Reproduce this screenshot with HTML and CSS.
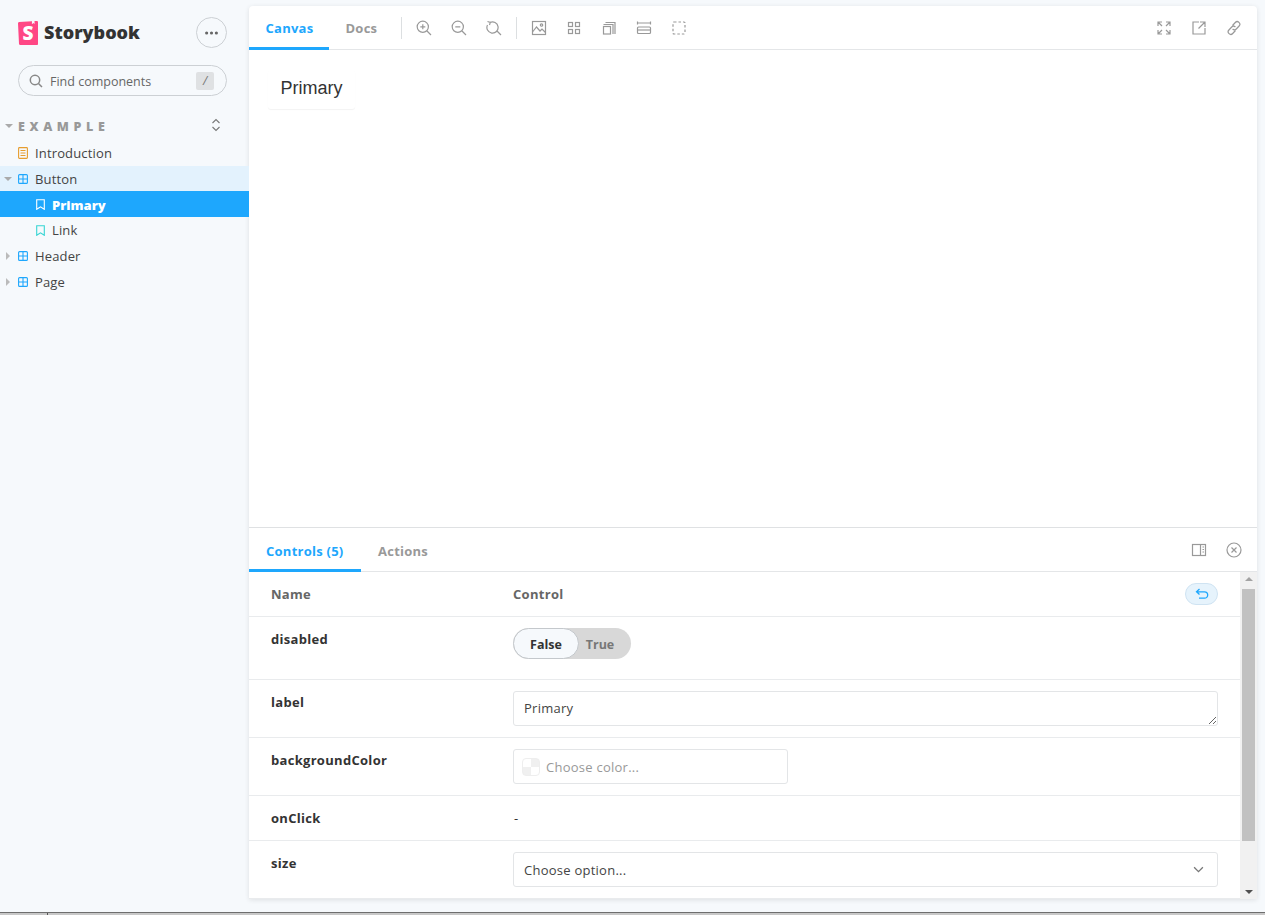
FILE: index.html
```html
<!DOCTYPE html>
<html lang="en">
<head>
    <meta charset="UTF-8">
    <title>Storybook</title>
    <link rel="stylesheet" href="styles.css">
</head>
<body>
    <div class="app">
        <aside class="sidebar">
            <div class="brand-row">
                <div class="brand">
                    <svg class="brand-logo" viewBox="0 0 20 24" width="20" height="24">
                        <path fill="#ff4785" d="M1 23 0 2.2C0 1.6.4 1.1 1 1L14 .2l-.1 2.7c0 .2.3.3.4.1l1-.9.9.7c.1.1.4 0 .4-.2L16.500 0l2.400-.1c.6 0 1.100.5 1.100 1.100v22c0 .6-.5 1.100-1.100 1L2 23.900c-.5 0-1-.4-1-.9z"/>
                        <text x="10" y="18.500" class="brand-s">S</text>
                    </svg>
                    <span class="brand-name">Storybook</span>
                </div>
                <button class="menu-btn" aria-label="Menu">
                    <svg viewBox="0 0 16 4" width="13" height="4"><circle cx="2" cy="2" r="1.900"/><circle cx="8" cy="2" r="1.900"/><circle cx="14" cy="2" r="1.900"/></svg>
                </button>
            </div>

            <div class="search">
                <svg viewBox="0 0 14 14" width="14" height="14" class="search-icon"><circle cx="6" cy="6" r="4.700"/><path d="M9.500 9.500 13 13"/></svg>
                <span class="search-text">Find components</span>
                <span class="search-key">/</span>
            </div>

            <div class="group-head">
                <span class="caret caret-down"></span>
                <span class="group-title">Example</span>
                <svg viewBox="0 0 10 14" width="10" height="14" class="expand-icon"><path d="M1.500 5 5 1.500 8.500 5M1.500 9 5 12.500 8.500 9"/></svg>
            </div>

            <ul class="tree">
                <li class="tree-row">
                    <svg viewBox="0 0 10 12" width="10" height="12" class="tree-icon doc"><rect x=".6" y=".6" width="8.800" height="10.800" rx=".8"/><path d="M2.500 3.500h5M2.500 6h5M2.500 8.500h5"/></svg>
                    Introduction
                </li>
                <li class="tree-row tree-open">
                    <span class="caret caret-down"></span>
                    <svg viewBox="0 0 10 10" width="10" height="10" class="tree-icon comp"><rect x=".6" y=".6" width="8.800" height="8.800" rx="1"/><path d="M5 .6v8.800M.6 5h8.800"/></svg>
                    Button
                </li>
                <li class="tree-row tree-story tree-selected">
                    <svg viewBox="0 0 9 11" width="9" height="11" class="tree-icon mark"><path d="M.7.7h7.600v9.600L4.500 7.800.7 10.300z"/></svg>
                    Primary
                </li>
                <li class="tree-row tree-story">
                    <svg viewBox="0 0 9 11" width="9" height="11" class="tree-icon mark"><path d="M.7.7h7.600v9.600L4.500 7.800.7 10.300z"/></svg>
                    Link
                </li>
                <li class="tree-row">
                    <span class="caret caret-right"></span>
                    <svg viewBox="0 0 10 10" width="10" height="10" class="tree-icon comp"><rect x=".6" y=".6" width="8.800" height="8.800" rx="1"/><path d="M5 .6v8.800M.6 5h8.800"/></svg>
                    Header
                </li>
                <li class="tree-row">
                    <span class="caret caret-right"></span>
                    <svg viewBox="0 0 10 10" width="10" height="10" class="tree-icon comp"><rect x=".6" y=".6" width="8.800" height="8.800" rx="1"/><path d="M5 .6v8.800M.6 5h8.800"/></svg>
                    Page
                </li>
            </ul>
        </aside>

        <main class="main">
            <div class="toolbar">
                <a class="tab tab-canvas tab-active">Canvas</a>
                <a class="tab tab-docs">Docs</a>
                <span class="sep sep-first"></span>
                <span class="tool"><svg viewBox="0 0 16 16"><circle cx="6.800" cy="6.800" r="5.600"/><path d="m11 11 4 4M4.300 6.800h5M6.800 4.300v5"/></svg></span>
                <span class="tool"><svg viewBox="0 0 16 16"><circle cx="6.800" cy="6.800" r="5.600"/><path d="m11 11 4 4M4.300 6.800h5"/></svg></span>
                <span class="tool"><svg viewBox="0 0 16 16"><path d="M4 2.500A5.600 5.600 0 1 1 1.500 5M11 11l4 4M1.500 1.500 4.300 2.300 3.500 5"/></svg></span>
                <span class="sep"></span>
                <span class="tool"><svg viewBox="0 0 16 16"><rect x="1.500" y="1.500" width="13" height="13"/><path d="m1.500 12 4-5 3.500 4 2-2 3.500 3.500"/><circle cx="10.500" cy="5" r="1.200"/></svg></span>
                <span class="tool"><svg viewBox="0 0 16 16"><rect x="2.500" y="2.500" width="4" height="4"/><rect x="9.500" y="2.500" width="4" height="4"/><rect x="2.500" y="9.500" width="4" height="4"/><rect x="9.500" y="9.500" width="4" height="4"/></svg></span>
                <span class="tool"><svg viewBox="0 0 16 16"><rect x="2.500" y="6.500" width="7" height="7.500"/><path d="M2.500 4.500h9.500v9.500M4.500 2.500h9.500v11.500"/></svg></span>
                <span class="tool"><svg viewBox="0 0 16 16"><path d="M1.500 3h13M1.500 1.500v3M14.500 1.500v3"/><rect x="1.500" y="7" width="13" height="6.500" rx="1"/><path d="M1.500 10h13"/></svg></span>
                <span class="tool"><svg viewBox="0 0 16 16"><rect x="2" y="2" width="12" height="12" rx="1" stroke-dasharray="2.500 2"/></svg></span>
                <span class="toolbar-end">
                    <span class="tool"><svg viewBox="0 0 16 16"><path d="M2 6V2h4M2 2l4 4M10 2h4v4M14 2l-4 4M2 10v4h4M2 14l4-4M14 10v4h-4M14 14l-4-4"/></svg></span>
                    <span class="tool"><svg viewBox="0 0 16 16"><path d="M8 2H2v12h12V8M9 2h5v5M14 2 7.500 8.500"/></svg></span>
                    <span class="tool"><svg viewBox="0 0 16 16"><path d="m6.500 5.500 2.800-3a2.500 2.500 0 0 1 3.800 3.500l-2.800 3a2.500 2.500 0 0 1-3.700 0M9.500 10.500l-2.800 3a2.500 2.500 0 0 1-3.800-3.500l2.800-3a2.500 2.500 0 0 1 3.700 0"/></svg></span>
                </span>
            </div>

            <div class="preview">
                <button class="demo-btn">Primary</button>
            </div>

            <section class="addons">
                <div class="addon-tabs">
                    <a class="tab tab-controls tab-active">Controls (5)</a>
                    <a class="tab">Actions</a>
                    <span class="toolbar-end">
                        <span class="tool"><svg viewBox="0 0 16 16"><rect x="1.500" y="2.500" width="13" height="11"/><path d="M9.500 2.500v11M11.500 5h1.500M11.500 7.500h1.500M11.500 10h1.500"/></svg></span>
                        <span class="tool"><svg viewBox="0 0 16 16"><circle cx="8" cy="8" r="7"/><path d="m5.500 5.500 5 5M10.500 5.500l-5 5" class="thick"/></svg></span>
                    </span>
                </div>

                <div class="addon-body">
                    <div class="args">
                        <div class="arg-row arg-head">
                            <span>Name</span>
                            <span>Control</span>
                            <button class="reset-btn" aria-label="Reset">
                                <svg viewBox="0 0 14 12" width="14" height="12"><path d="M4.500 1 1.500 3.800l3 2.800M1.500 3.800h8a3 3 0 0 1 0 6.400H4"/></svg>
                            </button>
                        </div>
                        <div class="arg-row">
                            <span class="arg-name">disabled</span>
                            <div class="toggle">
                                <span class="toggle-on">False</span>
                                <span class="toggle-off">True</span>
                            </div>
                        </div>
                        <div class="arg-row">
                            <span class="arg-name">label</span>
                            <textarea class="field text-field">Primary</textarea>
                        </div>
                        <div class="arg-row">
                            <span class="arg-name">backgroundColor</span>
                            <div class="field color-field">
                                <span class="swatch"></span>
                                <span class="color-hint">Choose color...</span>
                            </div>
                        </div>
                        <div class="arg-row arg-plain">
                            <span class="arg-name">onClick</span>
                            <span class="dash">-</span>
                        </div>
                        <div class="arg-row">
                            <span class="arg-name">size</span>
                            <div class="field select-field">
                                <span>Choose option...</span>
                                <svg viewBox="0 0 12 8" width="11" height="7"><path d="m1 1.500 5 5 5-5"/></svg>
                            </div>
                        </div>
                    </div>
                    <div class="scrollbar">
                        <span class="arrow-up"></span>
                        <span class="thumb"></span>
                        <span class="arrow-down"></span>
                    </div>
                </div>
            </section>
        </main>
    </div>
    <div class="taskbar"><span class="taskbar-cell"></span></div>
</body>
</html>
```

FILE: styles.css
```css
* {
    box-sizing: border-box;
}
html, body {
    height: 100%;
}
body {
    margin: 0;
    overflow: hidden;
    font-family: "Open Sans", "Noto Sans", sans-serif;
    font-size: 13px;
    color: #333;
    background-color: #f6f9fc;
}
.app {
    display: flex;
    height: 912px;
}

/* sidebar */
.sidebar {
    width: 249px;
    flex: none;
    padding-top: 17px;
}
.brand-row {
    display: flex;
    align-items: center;
    justify-content: space-between;
    padding: 0 22px 0 18px;
    height: 31px;
}
.brand {
    display: flex;
    align-items: center;
    gap: 6px;
}
.brand-s {
    font-size: 19px;
    font-weight: 800;
    fill: #fff;
    text-anchor: middle;
}
.brand-name {
    padding-bottom: 2px;
    font-size: 18px;
    font-weight: 800;
    color: #333;
}
.menu-btn {
    width: 31px;
    height: 31px;
    padding: 0;
    border: 1px solid #ccd0d4;
    border-radius: 50%;
    background: none;
    fill: #666;
}
.menu-btn svg {
    display: block;
    margin: 0 auto;
}
.search {
    display: flex;
    align-items: center;
    height: 31px;
    margin: 17px 22px 0 18px;
    padding: 0 12px 0 10px;
    border: 1px solid #ccd0d4;
    border-radius: 16px;
}
.search-icon {
    fill: none;
    stroke: #888;
    stroke-width: 1.5;
}
.search-text {
    flex: 1;
    margin-left: 7px;
    padding-top: 1px;
    font-size: 12.500px;
    color: #666;
}
.search-key {
    width: 18px;
    height: 18px;
    line-height: 18px;
    text-align: center;
    font-size: 12px;
    font-style: italic;
    color: #777;
    background-color: #dfe1e3;
    border-radius: 2px;
}
.group-head {
    position: relative;
    display: flex;
    align-items: center;
    height: 20px;
    margin-top: 20px;
    padding-left: 5px;
}
.group-title {
    margin-left: 5px;
    font-size: 12.500px;
    font-weight: 800;
    letter-spacing: 0.37em;
    text-transform: uppercase;
    color: #999;
}
.expand-icon {
    position: absolute;
    left: 211px;
    top: 2px;
    fill: none;
    stroke: #777;
    stroke-width: 1.1;
}
.caret {
    display: inline-block;
    width: 0;
    height: 0;
    flex: none;
}
.caret-down {
    border-left: 4px solid transparent;
    border-right: 4px solid transparent;
    border-top: 4px solid #aaa;
}
.caret-right {
    border-top: 4px solid transparent;
    border-bottom: 4px solid transparent;
    border-left: 4px solid #bbb;
    margin-left: 2px;
}
.tree {
    list-style: none;
    margin: 4px 0 0;
    padding: 0;
}
.tree-row {
    position: relative;
    display: flex;
    align-items: center;
    height: 26px;
    padding-left: 35px;
    letter-spacing: 0.15px;
    color: #444;
}
.tree-row:last-child {
    height: 25px;
}
.tree-row .caret {
    position: absolute;
    left: 4px;
    top: 11px;
}
.tree-row .caret-right {
    left: 4px;
    top: 9px;
    margin-left: 2px;
}
.tree-icon {
    position: absolute;
    left: 18px;
    fill: none;
    stroke-width: 1.1;
}
.doc {
    stroke: #e69d2f;
}
.comp {
    stroke: #1ea7fd;
}
.mark {
    stroke: #37d5d3;
    left: 36px;
}
.tree-open {
    height: 25px;
    padding-top: 1px;
    background-color: #e3f2fd;
}
.tree-story {
    padding-left: 52px;
}
.tree-selected {
    padding-top: 1px;
    background-color: #1ea7fd;
    color: #fff;
    font-weight: 800;
    letter-spacing: 0;
}
.tree-selected .mark {
    stroke: #fff;
}

/* main panel */
.main {
    display: flex;
    flex-direction: column;
    width: 1008px;
    height: 893px;
    margin-top: 6px;
    background-color: #fff;
    border-radius: 4px 4px 0 0;
    box-shadow: 0 1px 5px rgba(0, 0, 0, 0.1);
}
.toolbar {
    display: flex;
    align-items: stretch;
    flex: none;
    height: 44px;
    border-bottom: 1px solid #e4e6e8;
}
.tab {
    display: flex;
    align-items: center;
    padding: 3px 16px 0 16.500px;
    margin-bottom: -1px;
    font-weight: 700;
    letter-spacing: 0.25px;
    color: #999;
    border-bottom: 3px solid transparent;
}
.tab-active {
    color: #1ea7fd;
    border-bottom-color: #1ea7fd;
}
.tab-canvas {
    width: 80px;
}
.tab-docs {
    width: 66px;
}
.tab-controls {
    width: 112px;
}
.sep {
    width: 1px;
    height: 22px;
    margin: 11px 4.500px 0;
    background-color: #dcdfe1;
}
.sep-first {
    margin-left: 6px;
}
.tool {
    display: flex;
    align-items: center;
    justify-content: center;
    width: 35px;
}
.tool svg {
    width: 16px;
    height: 16px;
    fill: none;
    stroke: #999;
    stroke-width: 1.200;
}
.toolbar-end {
    display: flex;
    margin-left: auto;
    margin-right: 6px;
}

/* story */
.preview {
    flex: 1;
    padding: 20px 19px;
}
.demo-btn {
    display: block;
    width: 87px;
    height: 39px;
    padding: 0 0 2px;
    border: none;
    border-radius: 3px;
    background-color: #fff;
    font-family: "Liberation Sans", Arial, sans-serif;
    font-size: 18px;
    color: #333;
    box-shadow: 0 1px 1px rgba(0, 0, 0, 0.05);
}

/* addon panel */
.addons {
    flex: none;
    height: 372px;
    border-top: 1px solid #dfe1e3;
    display: flex;
    flex-direction: column;
}
.addon-tabs {
    display: flex;
    flex: none;
    height: 44px;
    border-bottom: 1px solid #e4e6e8;
}
.addon-tabs .tab {
    padding-top: 5px;
    padding-left: 17px;
}
.addon-body {
    display: flex;
    flex: 1;
    min-height: 0;
}
.args {
    flex: 1;
}
.arg-row {
    display: grid;
    grid-template-columns: 242px 1fr;
    align-items: start;
    position: relative;
    height: 58px;
    padding: 11px 22px 0;
    border-bottom: 1px solid #e9ebed;
}
.arg-row:nth-child(2) {
    height: 63px;
}
.arg-head {
    height: 45px;
    padding-top: 13px;
    font-weight: 700;
    letter-spacing: 0.3px;
    color: #666;
}
.arg-plain {
    height: 45px;
}
.arg-name {
    padding-top: 2px;
    font-weight: 700;
    letter-spacing: 0.3px;
    color: #333;
}
.reset-btn {
    position: absolute;
    right: 22px;
    top: 11px;
    width: 33px;
    height: 22px;
    padding: 0;
    border: 1px solid #cfe3f2;
    border-radius: 11px;
    background-color: #e6f3fc;
}
.reset-btn svg {
    display: block;
    margin: 0 auto;
    fill: none;
    stroke: #1ea7fd;
    stroke-width: 1.300;
}
.toggle {
    display: flex;
    align-items: center;
    width: 118px;
    height: 31px;
    font-size: 12.500px;
    font-weight: 700;
    background-color: #d8d8d8;
    border-radius: 16px;
}
.toggle-on {
    width: 66px;
    height: 31px;
    line-height: 31px;
    text-align: center;
    color: #333;
    background-color: #f6f9fc;
    border: 1px solid #c4c8cc;
    border-radius: 16px;
}
.toggle-off {
    width: 42px;
    padding-top: 1px;
    text-align: center;
    color: #777;
}
.field {
    display: flex;
    align-items: center;
    height: 35px;
    padding: 0 10px;
    font-family: inherit;
    font-size: 13px;
    letter-spacing: 0.25px;
    color: #444;
    background-color: #fff;
    border: 1px solid #e3e5e7;
    border-radius: 3px;
}
.text-field {
    display: block;
    width: 100%;
    padding: 7px 10px;
    line-height: 18px;
    outline: none;
}
.color-field {
    width: 275px;
    padding-left: 8px;
}
.swatch {
    width: 18px;
    height: 18px;
    margin-right: 6px;
    border: 1px solid #eee;
    border-radius: 4px;
    background: conic-gradient(#f0f0f0 25%, #fff 0 50%, #f0f0f0 0 75%, #fff 0);
}
.color-hint {
    color: #999;
}
.select-field {
    justify-content: space-between;
}
.select-field svg {
    margin-right: 3px;
    fill: none;
    stroke: #777;
    stroke-width: 1.500;
}
.dash {
    padding-top: 1px;
    padding-left: 1px;
    line-height: 20px;
}
.scrollbar {
    display: flex;
    flex-direction: column;
    align-items: center;
    flex: none;
    width: 17px;
    height: 327px;
    background-color: #f1f1f1;
}
.thumb {
    width: 13px;
    height: 252px;
    margin-top: 8px;
    background-color: #c1c1c1;
}
.arrow-up {
    margin-top: 5px;
    border-left: 4px solid transparent;
    border-right: 4px solid transparent;
    border-bottom: 4px solid #a3a3a3;
}
.arrow-down {
    margin-top: auto;
    margin-bottom: 5px;
    border-left: 4px solid transparent;
    border-right: 4px solid transparent;
    border-top: 4px solid #505050;
}

/* strip at the window bottom */
.taskbar {
    height: 3px;
    border-top: 1px solid #6e6e6e;
    background-color: #c8c8c8;
}
.taskbar-cell {
    display: block;
    width: 48px;
    height: 2px;
    border-right: 1px solid #555;
}
```
